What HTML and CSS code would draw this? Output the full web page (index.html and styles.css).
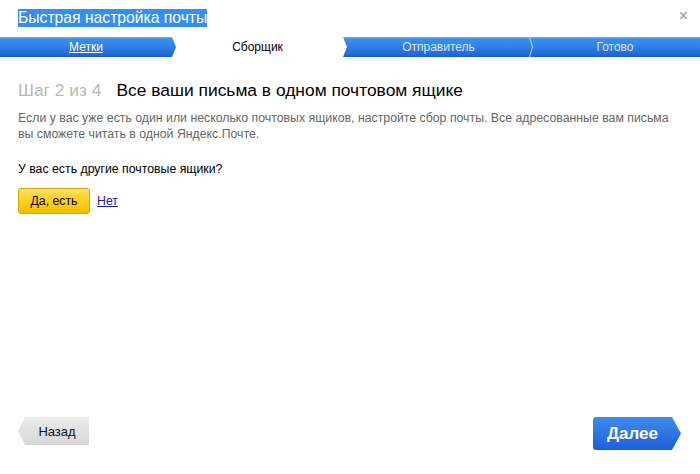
FILE: index.html
```html
<!DOCTYPE html>
<html lang="ru">
<head>
<meta charset="utf-8">
<title>Быстрая настройка почты</title>
<link rel="stylesheet" href="styles.css">
</head>
<body>
<div class="dialog">
  <header class="titlebar">
    <h1 class="title"><span class="sel">Быстрая настройка почты</span></h1>
    <span class="close">×</span>
  </header>
  <nav class="steps">
    <div class="step step-done"><a href="#" class="step-link">Метки</a></div>
    <div class="step step-current">Сборщик</div>
    <div class="step step-next">Отправитель</div>
    <div class="step step-next step-sep">Готово</div>
  </nav>
  <main class="content">
    <h2 class="heading"><span class="counter">Шаг 2 из 4</span><span class="htext">Все ваши письма в одном почтовом ящике</span></h2>
    <p class="desc">Если у вас уже есть один или несколько почтовых ящиков, настройте сбор почты. Все адресованные вам письма вы сможете читать в одной Яндекс.Почте.</p>
    <p class="question">У вас есть другие почтовые ящики?</p>
    <div class="answers">
      <button class="btn-yes">Да, есть</button>
      <a href="#" class="link-no">Нет</a>
    </div>
  </main>
  <footer class="footer">
    <button class="btn-back">Назад</button>
    <button class="btn-next">Далее</button>
  </footer>
</div>
</body>
</html>
```
FILE: styles.css
```css
html, body {
  margin: 0;
  padding: 0;
  background: #fff;
}
body {
  font-family: Arial, "Liberation Sans", sans-serif;
  color: #000;
}
.dialog {
  width: 700px;
  height: 474px;
  display: flex;
  flex-direction: column;
}
.titlebar {
  height: 37px;
  display: flex;
  align-items: flex-start;
  justify-content: space-between;
  padding: 0 12px 0 18px;
  box-sizing: border-box;
}
.title {
  margin: 8px 0 0;
  font-size: 15.7px;
  font-weight: normal;
  line-height: 20px;
}
.sel {
  background: #3390f0;
  color: #fff;
  padding-bottom: 1px;
}
.close {
  margin-top: 6px;
  font-size: 16px;
  color: #999;
  line-height: 20px;
}
.steps {
  height: 20px;
  display: flex;
  background: linear-gradient(#6db3f7 0, #3a90f0 2px, #2f7fe8 50%, #2166d8 90%, #1f5fcc 100%);
  font-size: 12px;
  line-height: 20px;
}
.step {
  position: relative;
  text-align: center;
  color: #d6e8fc;
}
.step-done { width: 172px; }
.step-current {
  width: 175px;
  background: #fff;
  color: #000;
  clip-path: polygon(0 0, 171px 0, 175px 50%, 171px 100%, 0 100%, 4px 50%);
  padding-right: 4px;
  box-sizing: border-box;
}
.step-next:nth-child(3) { width: 183px; }
.step-sep { flex: 1; }
.step-sep::before {
  content: "";
  position: absolute;
  left: -1px;
  top: 0;
  width: 4px;
  height: 20px;
  background: #bcdcfb;
  clip-path: polygon(0 0, 1px 0, 4px 50%, 1px 100%, 0 100%, 3px 50%);
}
.step-link {
  color: #fff;
}
.content {
  flex: 1;
  padding: 0 18px;
}
.heading {
  margin: 21px 0 0;
  font-size: 17.4px;
  font-weight: normal;
  line-height: 24px;
}
.counter {
  color: #b8b8b8;
  margin-right: 15px;
}
.desc {
  margin: 8px 0 0;
  font-size: 12.3px;
  line-height: 16px;
  color: #666;
  max-width: 660px;
}
.question {
  margin: 19px 0 0;
  font-size: 12.3px;
  line-height: 16px;
}
.answers {
  margin-top: 11px;
  display: flex;
  align-items: center;
  gap: 7px;
}
.btn-yes {
  width: 72px;
  height: 26px;
  border: 1px solid #d9a800;
  border-radius: 3px;
  background: linear-gradient(#ffe066, #fcd01b 50%, #f4bd00);
  font-family: inherit;
  font-size: 12.3px;
  color: #000;
  padding: 0;
}
.link-no {
  font-size: 12.3px;
  color: #1a1a99;
}
.footer {
  height: 57px;
  display: flex;
  justify-content: space-between;
  align-items: flex-start;
  padding: 0 19px 0 18px;
}
.btn-back {
  width: 71px;
  height: 28px;
  border: 0;
  padding: 0 0 0 7px;
  background: linear-gradient(#ececec, #d6d6d6);
  clip-path: polygon(7px 0, 100% 0, 100% 100%, 7px 100%, 0 50%);
  font-family: inherit;
  font-size: 13px;
  color: #111;
}
.btn-next {
  width: 88px;
  height: 33px;
  border: 0;
  padding: 0 9px 0 0;
  background: linear-gradient(#3d8cf0, #1e5fd6);
  clip-path: polygon(0 0, 79px 0, 100% 50%, 79px 100%, 0 100%);
  border-radius: 3px 0 0 3px;
  font-family: inherit;
  font-size: 17px;
  font-weight: bold;
  color: #fff;
}
```
